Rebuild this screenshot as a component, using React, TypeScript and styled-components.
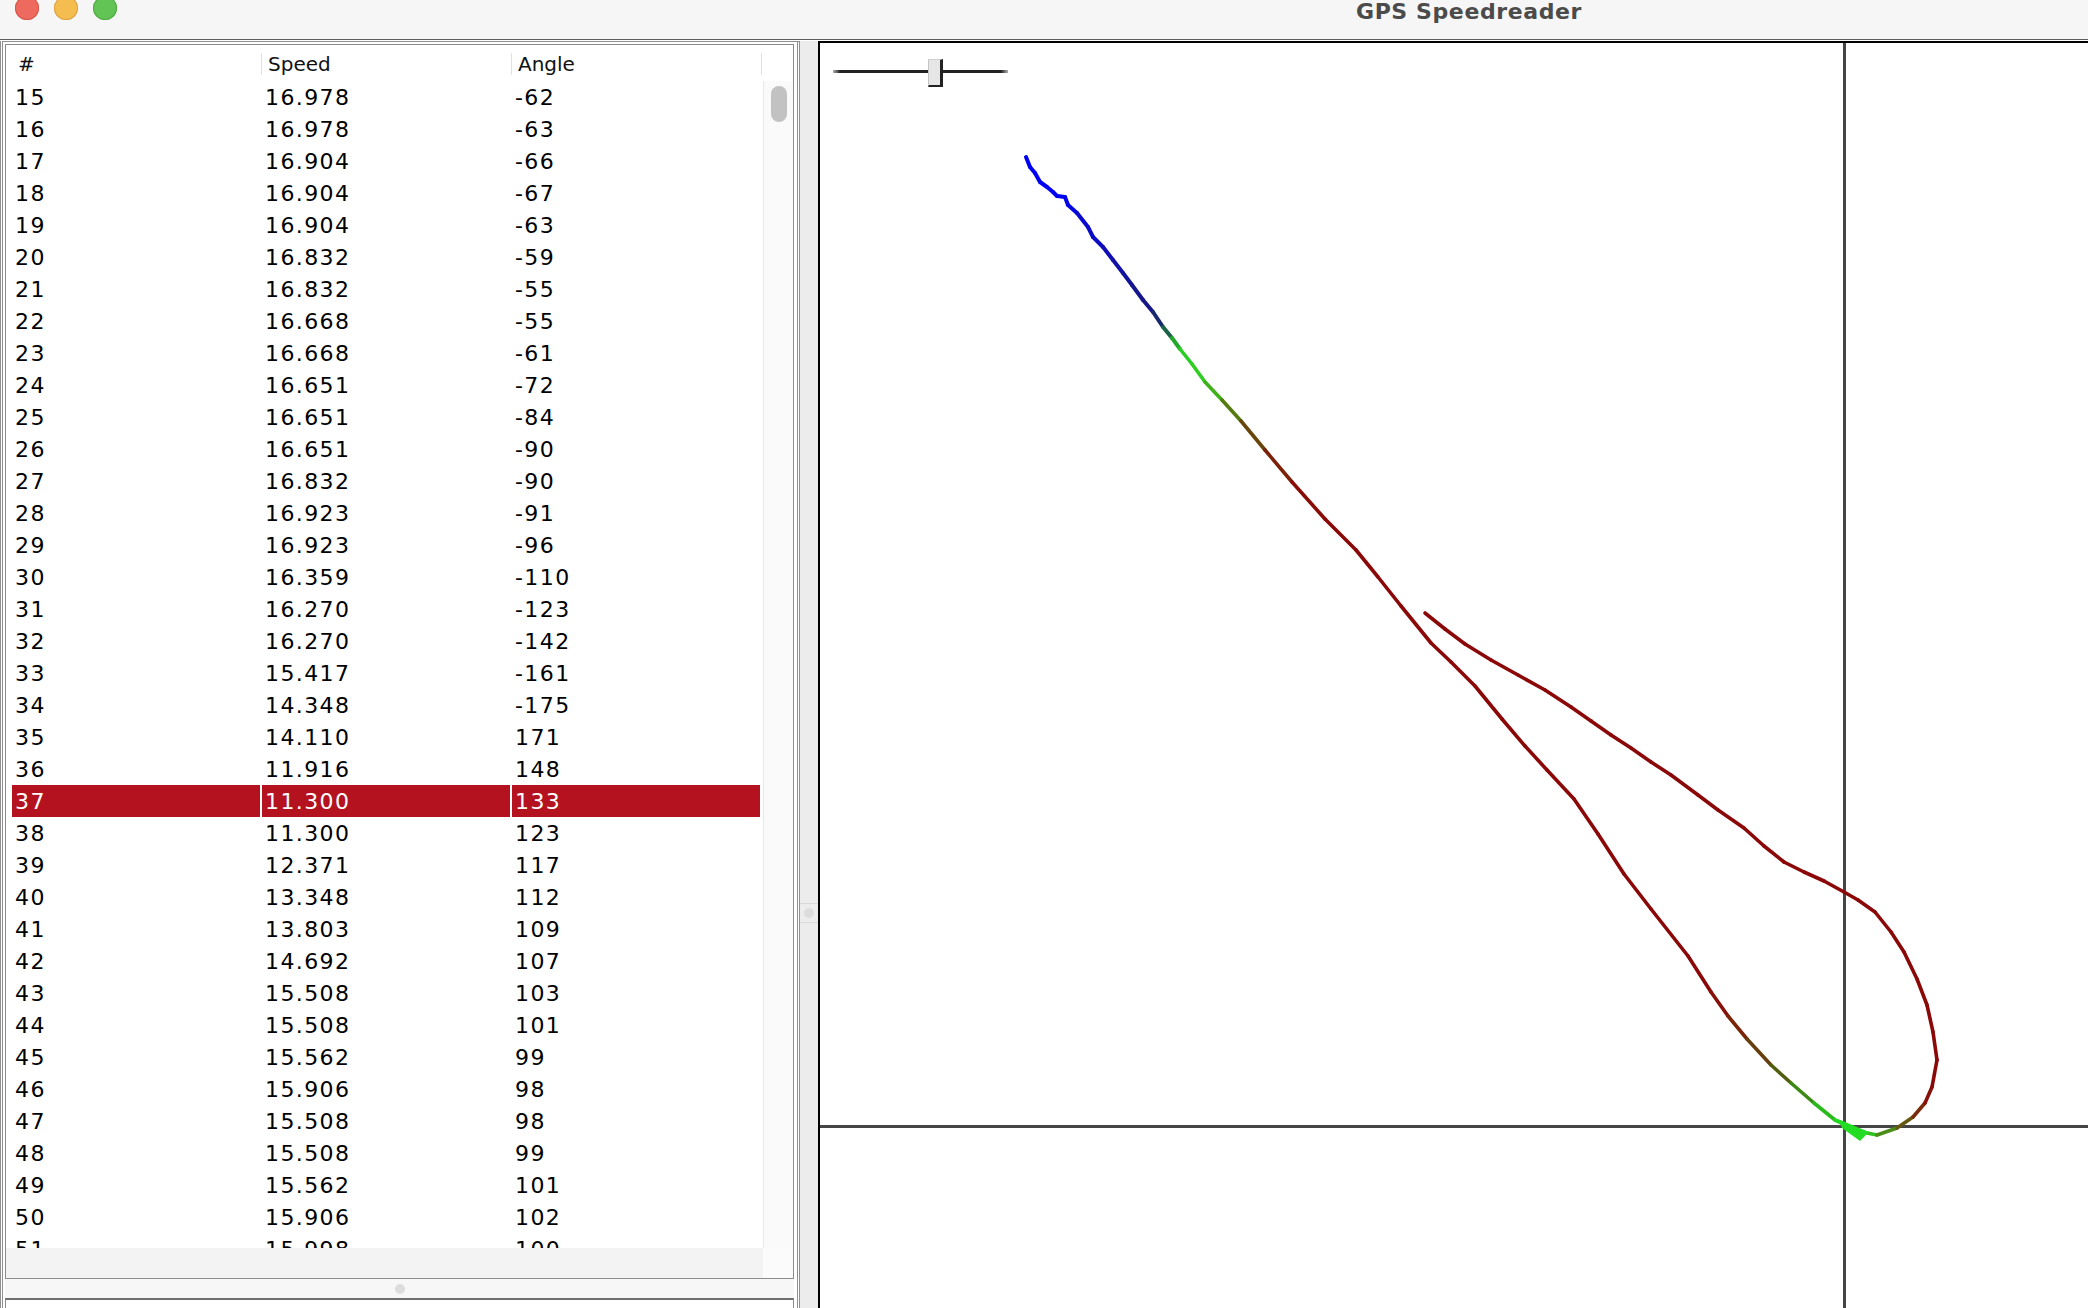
import React from 'react'
import styled, { createGlobalStyle } from 'styled-components'

const GlobalStyle = createGlobalStyle`
  html, body {
    margin: 0;
    padding: 0;
    overflow: hidden;
    background: #fff;
  }
  body {
    width: 2088px;
    height: 1308px;
  }
`

type Row = [number, string, number]

const ROWS: Row[] = [
  [15, '16.978', -62],
  [16, '16.978', -63],
  [17, '16.904', -66],
  [18, '16.904', -67],
  [19, '16.904', -63],
  [20, '16.832', -59],
  [21, '16.832', -55],
  [22, '16.668', -55],
  [23, '16.668', -61],
  [24, '16.651', -72],
  [25, '16.651', -84],
  [26, '16.651', -90],
  [27, '16.832', -90],
  [28, '16.923', -91],
  [29, '16.923', -96],
  [30, '16.359', -110],
  [31, '16.270', -123],
  [32, '16.270', -142],
  [33, '15.417', -161],
  [34, '14.348', -175],
  [35, '14.110', 171],
  [36, '11.916', 148],
  [37, '11.300', 133],
  [38, '11.300', 123],
  [39, '12.371', 117],
  [40, '13.348', 112],
  [41, '13.803', 109],
  [42, '14.692', 107],
  [43, '15.508', 103],
  [44, '15.508', 101],
  [45, '15.562', 99],
  [46, '15.906', 98],
  [47, '15.508', 98],
  [48, '15.508', 99],
  [49, '15.562', 101],
  [50, '15.906', 102],
  [51, '15.998', 100],
]

const SELECTED = 37

// track points in window pixels, colour given where it changes
type Pt = [number, number, string?]

const TRACK: Pt[] = [
  [1026, 157, '#0000f2'],
  [1030, 167],
  [1035, 173],
  [1040, 182],
  [1047, 187],
  [1053, 192],
  [1057, 196],
  [1065, 197],
  [1068, 205, '#0505e0'],
  [1077, 213],
  [1088, 227, '#0c0cc4'],
  [1093, 237],
  [1103, 247],
  [1113, 260, '#1212a6'],
  [1123, 273],
  [1132, 285, '#16168e'],
  [1143, 300],
  [1153, 312, '#181880'],
  [1163, 327, '#183a60'],
  [1172, 338, '#1d8a30'],
  [1180, 349, '#26c826'],
  [1192, 364, '#2cd424'],
  [1205, 382, '#36c820'],
  [1222, 400, '#4a9a14'],
  [1241, 421, '#5e5a0c'],
  [1265, 450, '#723008'],
  [1292, 482, '#841206'],
  [1325, 519, '#8b0808'],
  [1356, 550],
  [1378, 577],
  [1401, 606],
  [1431, 643],
  [1451, 662],
  [1475, 686],
  [1502, 719],
  [1525, 746],
  [1547, 770],
  [1574, 799],
  [1598, 834],
  [1624, 874],
  [1651, 909],
  [1688, 956],
  [1711, 992, '#8b0808'],
  [1728, 1016, '#821808'],
  [1747, 1039, '#72300c'],
  [1771, 1065, '#5c4c0e'],
  [1791, 1083, '#487010'],
  [1814, 1103, '#30a418'],
  [1835, 1120, '#22d020'],
  [1848, 1126, '#20e020'],
  [1862, 1132, '#22dc22'],
  [1877, 1135, '#3aa81c'],
  [1897, 1128, '#5a7212'],
  [1913, 1117, '#723c0e'],
  [1925, 1103, '#821a0a'],
  [1932, 1087, '#8b0808'],
  [1937, 1060],
  [1933, 1032],
  [1927, 1005],
  [1917, 979],
  [1904, 952],
  [1891, 932],
  [1875, 912],
  [1858, 900],
  [1844, 892],
  [1824, 881],
  [1804, 872],
  [1784, 862],
  [1764, 846],
  [1744, 828],
  [1718, 810],
  [1698, 795],
  [1671, 775],
  [1651, 762],
  [1631, 748],
  [1611, 735],
  [1591, 721],
  [1571, 707],
  [1545, 690],
  [1518, 675],
  [1491, 660],
  [1465, 644],
  [1445, 629],
  [1425, 613],
]

function hex(c: string) {
  return [1, 3, 5].map(i => parseInt(c.slice(i, i + 2), 16))
}

function mix(a: string, b: string) {
  const x = hex(a)
  const y = hex(b)
  return 'rgb(' + x.map((v, i) => Math.round((v + y[i]) / 2)).join(',') + ')'
}

function segments() {
  const out: { x1: number; y1: number; x2: number; y2: number; c: string }[] = []
  let cur = TRACK[0][2] as string
  for (let i = 0; i < TRACK.length - 1; i++) {
    const a = TRACK[i]
    const b = TRACK[i + 1]
    if (a[2]) cur = a[2]
    const next = b[2] || cur
    out.push({ x1: a[0], y1: a[1], x2: b[0], y2: b[1], c: mix(cur, next) })
  }
  return out
}

export default function App() {
  return (
    <>
      <GlobalStyle />
      <Window>
        <TitleBar>
          <Lights>
            <Light color="#ee6a5f" edge="#d55448" />
            <Light color="#f5bd4f" edge="#d9a03c" />
            <Light color="#61c454" edge="#4fa843" />
          </Lights>
          <Title>GPS Speedreader</Title>
        </TitleBar>

        <Main>
          <LeftPane>
            <Frame>
              <TableScroll>
                <Header>
                  <HeaderCell>#</HeaderCell>
                  <HeaderCell>Speed</HeaderCell>
                  <HeaderCell>Angle</HeaderCell>
                </Header>
                <Viewport>
                  {ROWS.map(([n, speed, angle]) => (
                    <TableRow key={n}>
                      <Cell selected={n === SELECTED}>{n}</Cell>
                      <Cell selected={n === SELECTED}>{speed}</Cell>
                      <Cell selected={n === SELECTED}>{angle}</Cell>
                    </TableRow>
                  ))}
                </Viewport>
                <VScroll>
                  <Thumb />
                </VScroll>
                <HScroll />
                <Corner />
              </TableScroll>
              <HSplit>
                <Grip />
              </HSplit>
              <BottomPanel />
            </Frame>
          </LeftPane>

          <VSplit>
            <GripLine />
            <Grip />
            <GripLine />
          </VSplit>

          <Canvas>
            <Drawing>
              <g transform="translate(-820 -43)">
                <line x1={1844.5} y1={0} x2={1844.5} y2={1800} stroke="#454545" strokeWidth={3} />
                <line x1={800} y1={1126.5} x2={2940} y2={1126.5} stroke="#454545" strokeWidth={3} />
                {segments().map((s, i) => (
                  <line
                    key={i}
                    x1={s.x1}
                    y1={s.y1}
                    x2={s.x2}
                    y2={s.y2}
                    stroke={s.c}
                    strokeWidth={i < 20 ? 4 : 3.6}
                    strokeLinecap="round"
                  />
                ))}
                <polygon points="1838,1119 1869,1132 1860,1141 1842,1128" fill="#22dd22" />
              </g>
            </Drawing>
            <Slider>
              <SliderTrack />
              <SliderThumb />
            </Slider>
          </Canvas>
        </Main>
      </Window>
    </>
  )
}

const Window = styled.div`
  width: 2938px;
  height: 1784px;
  display: flex;
  flex-direction: column;
  background: #fff;
  font-family: 'DejaVu Sans', 'Noto Sans', sans-serif;
`

const TitleBar = styled.div`
  flex: none;
  height: 39px;
  display: grid;
  grid-template-columns: 1fr auto 1fr;
  align-items: start;
  background: #f6f6f6;
  border-bottom: 1px solid #5e5e5e;
  overflow: hidden;
`

const Lights = styled.div`
  display: flex;
  gap: 15px;
  margin: -4px 0 0 15px;
`

const Light = styled.span<{ color: string; edge: string }>`
  width: 24px;
  height: 24px;
  border-radius: 50%;
  background: ${p => p.color};
  box-shadow: inset 0 0 0 1px ${p => p.edge};
`

const Title = styled.div`
  font-family: 'DejaVu Sans', sans-serif;
  font-weight: bold;
  font-size: 22px;
  line-height: 24px;
  letter-spacing: 0.6px;
  color: #4b4b4b;
`

const Main = styled.div`
  flex: 1;
  min-height: 0;
  display: flex;
  padding-top: 1px;
`

const LeftPane = styled.div`
  width: 800px;
  flex: none;
  display: flex;
  flex-direction: column;
`

const Frame = styled.div`
  flex: 1;
  display: flex;
  flex-direction: column;
  border: 3px double #8f8f8f;
  border-top: 1px solid #8f8f8f;
  padding: 2px 3px 0 2px;
`

const TableScroll = styled.div`
  flex: none;
  height: 1233px;
  border: 1px solid #8c8c8c;
  display: grid;
  grid-template-columns: 1fr 30px;
  grid-template-rows: 36px 1fr 30px;
  background: #fff;
`

const Header = styled.div`
  grid-column: 1 / 3;
  display: grid;
  grid-template-columns: 248px 248px 248px;
  column-gap: 2px;
  padding: 3px 0 0 6px;
  background: #fff;
`

const HeaderCell = styled.div`
  position: relative;
  padding-left: 6px;
  font-size: 20px;
  line-height: 33px;
  color: #111;

  &::after {
    content: '';
    position: absolute;
    right: -2px;
    top: 5px;
    bottom: 6px;
    width: 1px;
    background: #e0e0e0;
  }
`

const Viewport = styled.div`
  overflow: hidden;
  padding-left: 6px;
`

const TableRow = styled.div`
  display: grid;
  grid-template-columns: 248px 248px 248px;
  column-gap: 2px;
  height: 32px;
`

const Cell = styled.div<{ selected?: boolean }>`
  height: 32px;
  padding-left: 3px;
  font-size: 22px;
  line-height: 34px;
  letter-spacing: 1.4px;
  white-space: nowrap;
  color: ${p => (p.selected ? '#fff' : '#000')};
  background: ${p => (p.selected ? '#b5121f' : 'transparent')};
`

const VScroll = styled.div`
  background: #fafafa;
  border-left: 1px solid #e8e8e8;
  padding: 5px 0 0 7px;
`

const Thumb = styled.div`
  width: 16px;
  height: 36px;
  border-radius: 8px;
  background: #c2c2c2;
`

const HScroll = styled.div`
  background: #f3f3f3;
`

const Corner = styled.div`
  background: #fbfbfb;
`

const HSplit = styled.div`
  flex: none;
  height: 19px;
  display: flex;
  align-items: center;
  justify-content: center;
  background: #f7f7f7;
`

const Grip = styled.span`
  width: 10px;
  height: 10px;
  border-radius: 50%;
  background: #dcdcdc;
`

const BottomPanel = styled.div`
  flex: 1;
  border: 1px solid #8c8c8c;
  border-top: 2px solid #6e6e6e;
  background: #fff;
`

const VSplit = styled.div`
  width: 18px;
  flex: none;
  display: flex;
  flex-direction: column;
  align-items: center;
  justify-content: center;
  gap: 4px;
  background: #ececec;
`

const GripLine = styled.span`
  width: 18px;
  height: 1px;
  background: #dadada;
`

const Canvas = styled.div`
  flex: 1;
  position: relative;
  background: #fff;
  border-left: 2px solid #000;
  border-top: 2px solid #000;
`

const Drawing = styled.svg`
  display: block;
  width: 100%;
  height: 100%;
`

const Slider = styled.div`
  position: absolute;
  left: 13px;
  top: 16px;
  width: 175px;
  height: 28px;
`

const SliderTrack = styled.div`
  margin-top: 11px;
  width: 100%;
  height: 3px;
  background: linear-gradient(to right, #b0b0b0 0, #222 4%, #222 96%, #b0b0b0 100%);
`

const SliderThumb = styled.div`
  position: absolute;
  left: 95px;
  top: 0;
  width: 11px;
  height: 25px;
  background: #e6e6e6;
  border-left: 1px solid #c4c4c4;
  border-top: 1px solid #cfcfcf;
  border-right: 3px solid #222;
  border-bottom: 2px solid #222;
`
